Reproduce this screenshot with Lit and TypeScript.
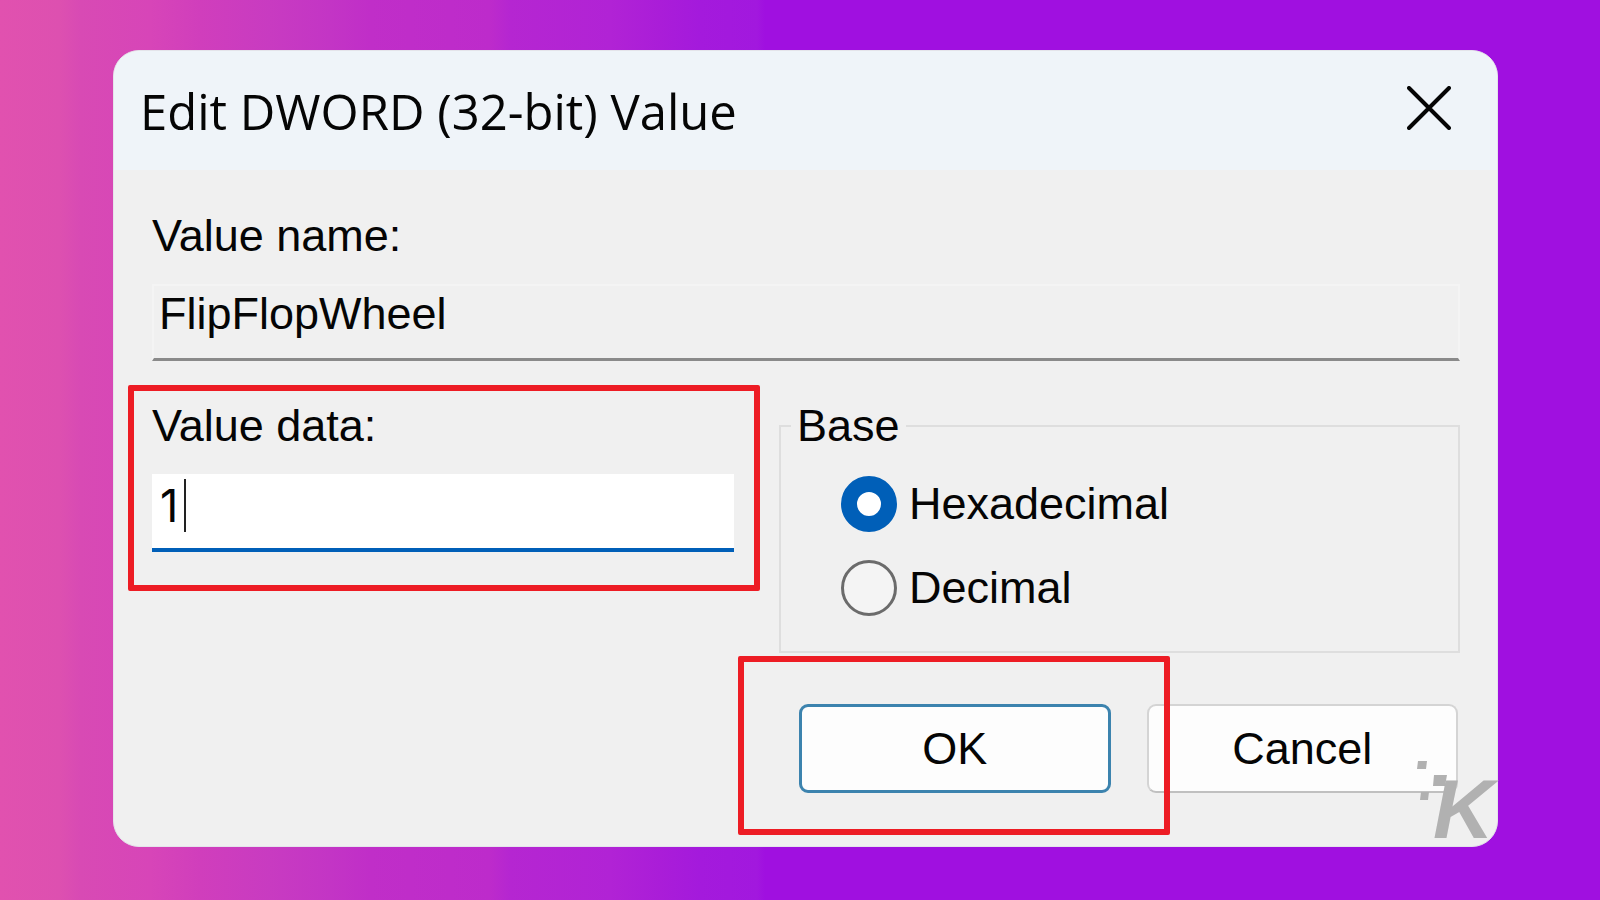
import { LitElement, html, css } from "lit";
import { customElement, state } from "lit/decorators.js";

@customElement("app-root")
export class AppRoot extends LitElement {
  static styles = css`
    :host {
      display: block;
      font: 45px/52px "Liberation Sans", Arial, sans-serif;
      color: #050505;
    }
    * {
      box-sizing: border-box;
    }
    .page {
      min-height: 100vh;
      padding: 50px 102px 50px 113px;
      background: linear-gradient(
        to right,
        #e151af 0,
        #dd50b0 60px,
        #d84ab4 80px,
        #d745b8 150px,
        #d03ebc 200px,
        #c83bc1 270px,
        #c335c5 330px,
        #c02ec8 370px,
        #bd2bcb 490px,
        #b526d1 510px,
        #b123d5 610px,
        #aa1dd8 660px,
        #a41adc 700px,
        #a218de 757px,
        #a010e0 765px
      );
    }
    .dialog {
      position: relative;
      border: 1px solid #e4e4ea;
      border-radius: 26px;
      background: #f0f0f0;
    }
    .titlebar {
      display: flex;
      align-items: center;
      justify-content: space-between;
      height: 119px;
      padding: 0 46px 0 26px;
      border-radius: 25px 25px 0 0;
      background: #eff4f9;
    }
    .title {
      margin: 0;
      font: 400 49px/64px "Open Sans", "Noto Sans", sans-serif;
    }
    .close {
      display: flex;
      padding: 0 0 5px;
      border: 0;
      background: none;
    }
    .body {
      padding: 40px 37px 53px 38px;
    }
    .label {
      display: block;
      margin-bottom: 22px;
    }
    .input {
      display: block;
      width: 100%;
      height: 77px;
      padding: 3px 8px 19px 5px;
      border: 2px solid #f4f4f4;
      border-bottom: 3px solid #8a8a8a;
      border-radius: 0;
      background: #f0f0f0;
      color: inherit;
      font: inherit;
      outline: none;
    }
    .input.active {
      height: 78px;
      border: 0;
      border-bottom: 4px solid #005fb8;
      padding: 5px 8px 17px 8px;
      background: #fff;
      font-family: Inter, "Liberation Sans", sans-serif;
    }
    .columns {
      display: grid;
      grid-template-columns: 582fr 681fr;
      column-gap: 45px;
      align-items: start;
      margin-top: 39px;
    }
    .field {
      position: relative;
    }
    .caret {
      position: absolute;
      left: 32px;
      bottom: 20px;
      width: 2px;
      height: 53px;
      background: #222;
    }
    .mark {
      position: absolute;
      z-index: 2;
      border: 6px solid #ed1c24;
      border-radius: 2px;
      pointer-events: none;
    }
    .mark-data {
      inset: -15px -26px -39px -24px;
    }
    .mark-ok {
      inset: -48px -59px -42px -61px;
    }
    .group {
      min-width: 0;
      margin: 0;
      padding: 24px 12px 35px 60px;
      border: 2px solid #dedede;
    }
    .legend {
      margin-left: -50px;
      padding: 0 6px;
    }
    .option {
      display: flex;
      align-items: center;
      gap: 12px;
      height: 56px;
    }
    .option + .option {
      margin-top: 28px;
    }
    .radio {
      appearance: none;
      flex: none;
      width: 56px;
      height: 56px;
      margin: 0;
      border: 3px solid #6b6b6b;
      border-radius: 50%;
      background: #f4f4f4;
    }
    .radio:checked {
      border: 16px solid #005fb8;
      background: #fff;
    }
    .actions {
      grid-column: 2;
      display: grid;
      grid-template-columns: 1fr 1fr;
      gap: 36px;
      margin: 51px 2px 0 20px;
    }
    .action {
      position: relative;
    }
    .button {
      display: block;
      width: 100%;
      height: 89px;
      padding: 0;
      border: 2px solid #d4d4d4;
      border-bottom-color: #c0c0c0;
      border-radius: 9px;
      background: #fdfdfd;
      color: inherit;
      font: inherit;
    }
    .button.primary {
      border: 3px solid #3c83ae;
    }
    .logo {
      position: absolute;
      right: 0;
      bottom: 0;
      z-index: 3;
      overflow: visible;
      fill: #b1b1b1;
      font: italic 700 84px/90px "Liberation Sans", Arial, sans-serif;
      pointer-events: none;
    }
  `;

  @state() private base = "hex";

  private option(value: string, text: string) {
    return html`<label class="option">
      <input
        class="radio"
        type="radio"
        name="base"
        .checked=${this.base === value}
        @change=${() => (this.base = value)}
      />
      <span>${text}</span>
    </label>`;
  }

  render() {
    return html`
      <main class="page">
        <section class="dialog" role="dialog" aria-labelledby="title">
          <header class="titlebar">
            <h1 class="title" id="title">Edit DWORD (32-bit) Value</h1>
            <button class="close" type="button" aria-label="Close">
              <svg width="44" height="44" viewBox="0 0 44 44">
                <path d="M2 2L42 42M42 2L2 42" stroke="#050505" stroke-width="4" stroke-linecap="round" />
              </svg>
            </button>
          </header>
          <form class="body" @submit=${(e: Event) => e.preventDefault()}>
            <label class="label" for="name">Value name:</label>
            <input class="input" id="name" type="text" readonly value="FlipFlopWheel" />
            <div class="columns">
              <div class="field">
                <label class="label" for="data">Value data:</label>
                <input class="input active" id="data" type="text" value="1" />
                <span class="caret"></span>
                <span class="mark mark-data"></span>
              </div>
              <fieldset class="group">
                <legend class="legend">Base</legend>
                ${this.option("hex", "Hexadecimal")} ${this.option("dec", "Decimal")}
              </fieldset>
              <div class="actions">
                <div class="action">
                  <button class="button primary" type="submit">OK</button>
                  <span class="mark mark-ok"></span>
                </div>
                <div class="action">
                  <button class="button" type="button">Cancel</button>
                </div>
              </div>
            </div>
          </form>
          <svg class="logo" width="84" height="90" viewBox="0 0 84 90" aria-hidden="true">
            <path d="M5 5h9l-1 8h-9zM21 19h13l-2 11h-12zM8 36h8l-1 8h-8z" />
            <text x="20" y="82">K</text>
          </svg>
        </section>
      </main>
    `;
  }
}
